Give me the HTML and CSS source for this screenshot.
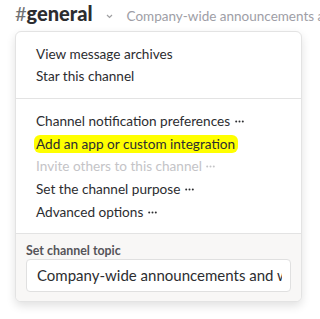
FILE: index.html
```html
<!DOCTYPE html>
<html>
<head>
<meta charset="utf-8">
<link rel="stylesheet" href="styles.css">
</head>
<body>
<div class="header">
  <span class="hash">#</span><span class="name">general</span>
  <svg class="chev" width="7" height="5" viewBox="0 0 7 5"><path d="M1 1 L3.5 3.5 L6 1" fill="none" stroke="#a0a0a2" stroke-width="1.2"/></svg>
  <span class="topic">Company-wide announcements a</span>
</div>
<div class="menu">
  <div class="section">
    <div class="item">View message archives</div>
    <div class="item">Star this channel</div>
  </div>
  <div class="section second">
    <div class="item">Channel notification preferences <svg class="dots" width="9" height="3" viewBox="0 0 9 3"><circle cx="1.2" cy="1.5" r="1"/><circle cx="4.5" cy="1.5" r="1"/><circle cx="7.8" cy="1.5" r="1"/></svg></div>
    <div class="item"><span class="hl">Add an app or custom integration</span></div>
    <div class="item disabled">Invite others to this channel <svg class="dots" width="9" height="3" viewBox="0 0 9 3"><circle cx="1.2" cy="1.5" r="1"/><circle cx="4.5" cy="1.5" r="1"/><circle cx="7.8" cy="1.5" r="1"/></svg></div>
    <div class="item">Set the channel purpose <svg class="dots" width="9" height="3" viewBox="0 0 9 3"><circle cx="1.2" cy="1.5" r="1"/><circle cx="4.5" cy="1.5" r="1"/><circle cx="7.8" cy="1.5" r="1"/></svg></div>
    <div class="item">Advanced options <svg class="dots" width="9" height="3" viewBox="0 0 9 3"><circle cx="1.2" cy="1.5" r="1"/><circle cx="4.5" cy="1.5" r="1"/><circle cx="7.8" cy="1.5" r="1"/></svg></div>
  </div>
  <div class="footer">
    <div class="label">Set channel topic</div>
    <div class="input"><div class="inner">Company-wide announcements and work-based matters</div></div>
  </div>
</div>
</body>
</html>
```
FILE: styles.css
```css
html, body { margin: 0; padding: 0; background: #fff; }
body { font-family: Lato, "Noto Sans", sans-serif; color: #2c2d30; width: 320px; height: 319px; overflow: hidden; }
.header { display: flex; align-items: baseline; white-space: nowrap; padding: 1px 0 0 15px; height: 29px; box-sizing: border-box; overflow: hidden; }
.hash { font-size: 20px; color: #717274; font-weight: 400; }
.name { font-size: 20px; font-weight: 900; color: #2c2d30; }
.chev { margin: 0 14px 0 13px; align-self: center; position: relative; top: 1px; flex: none; }
.topic { font-size: 13.5px; color: #9e9ea6; }
.menu { margin: 2px 0 0 15px; width: 287px; border: 1px solid #e3e3e3; border-radius: 6px; box-shadow: 0 4px 10px rgba(0,0,0,0.12); background: #fff; overflow: hidden; box-sizing: border-box; }
.section { padding: 11px 0 11px 20px; border-bottom: 1px solid #e3e3e3; }
.section.second { padding-top: 11px; padding-bottom: 9px; }
.item { font-size: 13.6px; line-height: 22px; color: #2c2d30; white-space: nowrap; }
.second .item { line-height: 22.7px; }
.item.disabled { color: #c4c4c7; }
.dots { fill: currentColor; vertical-align: 3px; margin-left: 1px; }
.hl { background: #ffff00; border-radius: 6px; padding: 1px 3px 1px 2px; margin-left: -2px; }
.footer { background: #f8f7f6; padding: 8px 10px 9px 10px; }
.label { font-size: 12.4px; font-weight: 700; color: #555459; line-height: 17px; margin-bottom: 0; }
.input { background: #fff; border: 1px solid #e0e0e0; border-radius: 4px; height: 33px; box-sizing: border-box; padding: 0 8px 0 10px; }
.inner { font-size: 15px; line-height: 31px; color: #2c2d30; white-space: nowrap; overflow: hidden; }
```
